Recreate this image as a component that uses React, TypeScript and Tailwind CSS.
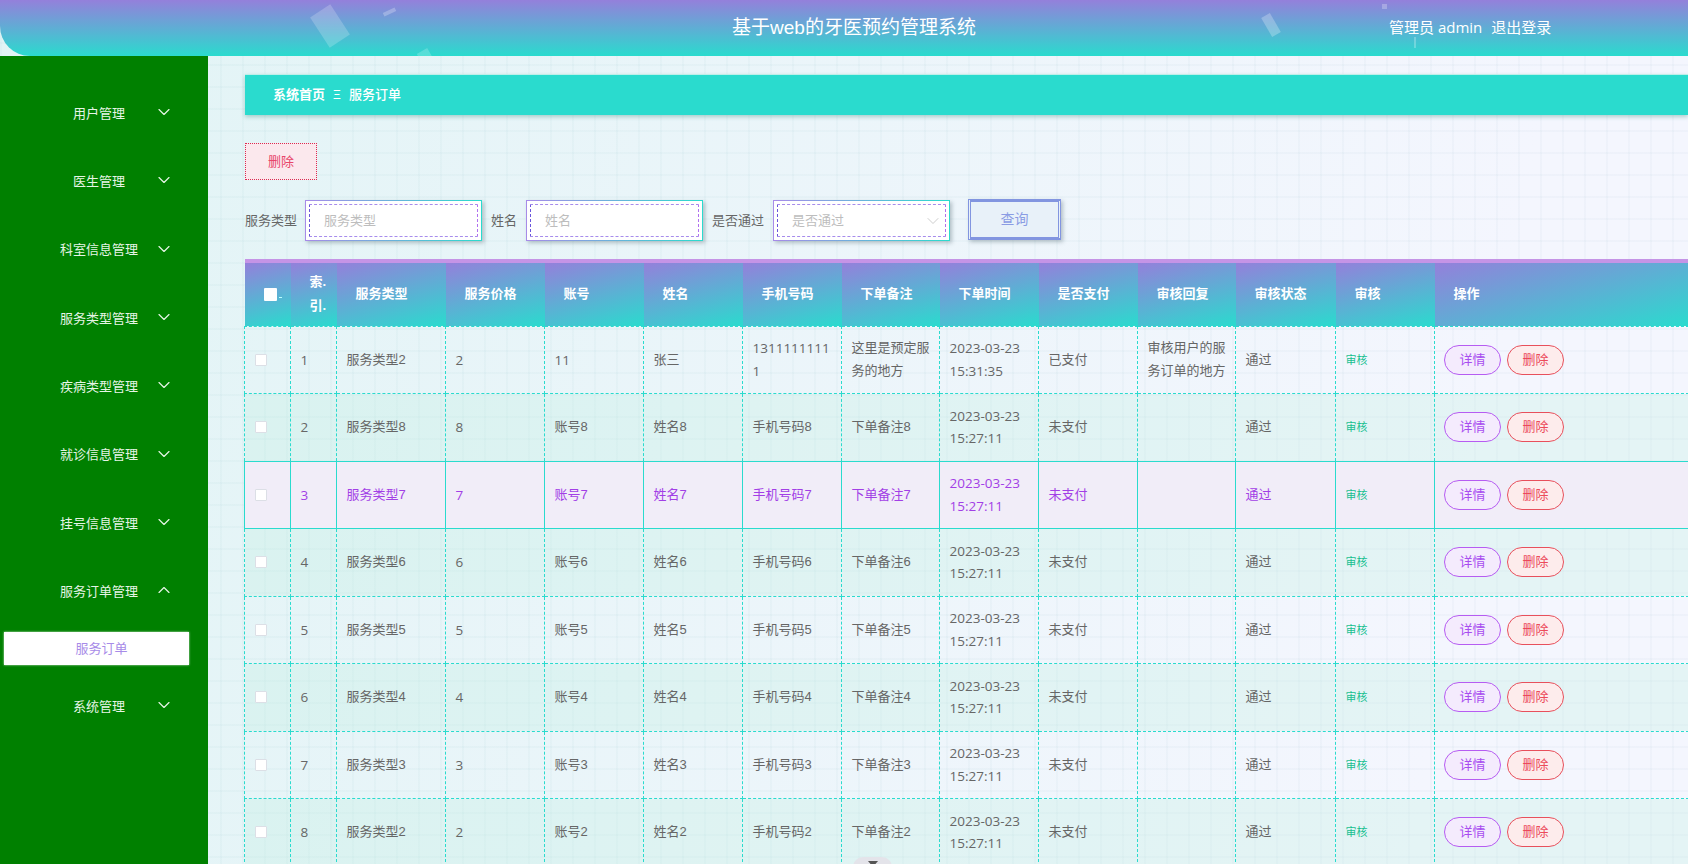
import { ChevronDown, ChevronUp } from "lucide-react";

const menus = ["用户管理", "医生管理", "科室信息管理", "服务类型管理", "疾病类型管理", "就诊信息管理", "挂号信息管理"];

const heads = ["服务类型", "服务价格", "账号", "姓名", "手机号码", "下单备注", "下单时间", "是否支付", "审核回复", "审核状态", "审核", "操作"];

type Row = { id: number; type: string; price: string; acc: string; name: string; phone: string; note: string; time: string; paid: string; reply: string };

const rows: Row[] = [
  { id: 1, type: "服务类型2", price: "2", acc: "11", name: "张三", phone: "13111111111", note: "这里是预定服务的地方", time: "2023-03-23 15:31:35", paid: "已支付", reply: "审核用户的服务订单的地方" },
  ...[8, 7, 6, 5, 4, 3, 2].map((n, i) => ({
    id: i + 2,
    type: `服务类型${n}`,
    price: `${n}`,
    acc: `账号${n}`,
    name: `姓名${n}`,
    phone: `手机号码${n}`,
    note: `下单备注${n}`,
    time: "2023-03-23 15:27:11",
    paid: "未支付",
    reply: "",
  })),
];

function InputBox({ text, select }: { text: string; select?: boolean }) {
  return (
    <div className="h-[41px] w-[177px] shrink-0 bg-[linear-gradient(90deg,#a78be8,#2adbce)] p-px shadow-[2px_2px_4px_rgba(90,110,120,0.4)]">
      <div className="h-full w-full bg-white p-[3px]">
        <div className={`flex h-full w-full items-center justify-between border border-dashed border-y-[#a78cec] border-l-[#6a55dc] border-r-[#b070f0] pl-[14px] text-[13px] text-[#bdbdbd] ${select ? "pr-[2px]" : "pr-[7px]"}`}>
          <span>{text}</span>
          {select && <ChevronDown size={20} strokeWidth={1.1} className="text-[#c8c8c8]" />}
        </div>
      </div>
    </div>
  );
}

function Td({ children, hover, className = "" }: { children?: React.ReactNode; hover: boolean; className?: string }) {
  return (
    <td className={`border border-[#2adbce] pl-[9.5px] pr-[8px] align-middle ${hover ? "border-solid" : "border-dashed"} ${className}`}>{children}</td>
  );
}

const num = "font-['Open_Sans','Noto_Sans_CJK_SC',sans-serif] text-[13.5px]";

export default function App() {
  return (
    <div className="h-[864px] w-[1688px] overflow-hidden bg-[linear-gradient(90deg,rgba(120,170,190,0.05)_2px,transparent_2px),linear-gradient(0deg,rgba(120,170,190,0.05)_2px,transparent_2px),linear-gradient(100deg,#e1f4f5,#f4f6fe_85%)] [background-size:22px_22px,22px_22px,100%_100%] font-['Liberation_Sans','Noto_Sans_CJK_SC',sans-serif] text-[13px]">
      <header className="relative flex h-[56px] items-center overflow-hidden rounded-bl-[30px] bg-[linear-gradient(180deg,#9480db,#2adbce)] text-white">
        <div className="absolute left-[318px] top-[8px] h-[36px] w-[24px] rotate-[-33deg] bg-white/20" />
        <div className="absolute left-[383px] top-[10px] h-[4px] w-[13px] rotate-[-25deg] bg-white/25" />
        <div className="absolute left-[420px] top-[50px] h-[16px] w-[12px] rotate-[-30deg] bg-white/20" />
        <div className="absolute left-[1266px] top-[14px] h-[22px] w-[10px] rotate-[-30deg] bg-white/25" />
        <div className="absolute left-[1382px] top-[4px] h-[5px] w-[5px] bg-white/25" />
        <div className="absolute left-[1414px] top-[37px] h-[11px] w-[2px] bg-white/25" />
        <div className="w-full pl-[20px] text-center text-[19px]">基于web的牙医预约管理系统</div>
        <div className="absolute left-[1389px] top-[17px] flex gap-[9px] font-['Open_Sans','Noto_Sans_CJK_SC',sans-serif] text-[15px] leading-[20px]">
          <span>管理员 admin</span>
          <span>退出登录</span>
        </div>
      </header>

      <div className="flex h-[808px]">
        <aside className="h-full w-[208px] shrink-0 bg-[#008000] pt-[23.5px] text-[13px] text-[#e6f5e6]">
          {menus.map((m) => (
            <div key={m} className="flex h-[68.3px] items-center">
              <span className="w-[198px] text-center">{m}</span>
              <ChevronDown size={20} strokeWidth={1.4} className="-ml-[44px] -mt-[3px] shrink-0" />
            </div>
          ))}
          <div className="flex h-[68.3px] items-center">
            <span className="w-[198px] text-center">服务订单管理</span>
            <ChevronUp size={20} strokeWidth={1.4} className="-ml-[44px] -mt-[3px] shrink-0" />
          </div>
          <div className="mx-[4px] mb-[7px] mt-[6px] flex h-[33.5px] w-[185px] items-center justify-center bg-white pl-[10px] text-[#a78be8] shadow-[0_0_2px_rgba(255,255,255,0.8)]">
            服务订单
          </div>
          <div className="flex h-[68.3px] items-center">
            <span className="w-[198px] text-center">系统管理</span>
            <ChevronDown size={20} strokeWidth={1.4} className="-ml-[44px] -mt-[3px] shrink-0" />
          </div>
        </aside>

        <main className="relative min-w-0 flex-1 pl-[37px] pt-[18px]">
          <div className="flex h-[41px] items-center border-t border-[#bfeee9] bg-[#2adbce] pl-[28px] text-[13px] text-white shadow-[0_2px_4px_rgba(90,160,150,0.45)]">
            <span className="font-bold">系统首页</span>
            <span className="mx-[8px] w-[8px] text-center text-[12px]">Ξ</span>
            <span className="font-medium">服务订单</span>
          </div>

          <button className="mt-[28px] block h-[37px] w-[72px] border border-dotted border-[#dc2a50] bg-[#fbe8ed] text-[13px] text-[#e8456a]">删除</button>

          <div className="mt-[20px] flex h-[41px] items-center whitespace-nowrap text-[#666]">
            <span className="mr-[9px] w-[51px]">服务类型</span>
            <InputBox text="服务类型" />
            <span className="mx-[9px] w-[26px]">姓名</span>
            <InputBox text="姓名" />
            <span className="mx-[9px] w-[52px]">是否通过</span>
            <InputBox text="是否通过" select />
            <button className="-mt-[3px] ml-[18px] h-[41px] w-[93px] border-[3px] border-[#8295e0] bg-[#e8f1f9] text-[14px] text-[#8a9ce4] shadow-[2px_2px_4px_rgba(90,110,120,0.4)] [border-left-style:double] [border-right-style:double]">查询</button>
          </div>

          <table className="-ml-px mt-[18px] w-[1444px] table-fixed border-collapse border-t-[4px] border-t-[#c594e6] text-[13px] leading-[22.5px] text-[#666]">
            <colgroup>
              <col className="w-[46px]" />
              <col className="w-[46px]" />
              <col className="w-[109px]" />
              <col className="w-[99px]" />
              <col className="w-[99px]" />
              <col className="w-[99px]" />
              <col className="w-[99px]" />
              <col className="w-[98px]" />
              <col className="w-[99px]" />
              <col className="w-[99px]" />
              <col className="w-[98px]" />
              <col className="w-[100px]" />
              <col className="w-[99px]" />
              <col className="w-[254px]" />
            </colgroup>
            <thead>
              <tr className="h-[65px] text-[13px] font-bold text-white">
                <th className="bg-[linear-gradient(165deg,#9480db,#2adbce)] pl-[19px] text-left">
                  <span className="flex items-center">
                    <span className="block h-[13px] w-[13px] rounded-[1px] bg-white" />
                    <span className="ml-[2px] mt-[6px] h-[1px] w-[3px] bg-[#bff]" />
                  </span>
                </th>
                <th className="bg-[linear-gradient(165deg,#9480db,#2adbce)] pl-[19px] text-left leading-[24px]">
                  索.
                  <br />
                  引.
                </th>
                {heads.map((h) => (
                  <th key={h} className="bg-[linear-gradient(165deg,#9480db,#2adbce)] pl-[19px] text-left">
                    {h}
                  </th>
                ))}
              </tr>
            </thead>
            <tbody>
              {rows.map((r, idx) => {
                const hover = r.id === 3;
                return (
                  <tr
                    key={r.id}
                    className={`h-[67.5px] ${hover ? "bg-[#f1edf8] text-[#a23fe6]" : idx % 2 === 1 ? "bg-[rgba(192,240,224,0.3)]" : ""}`}
                  >
                    <Td hover={hover}>
                      <span className="block h-[12px] w-[12px] rounded-[1px] border border-[#dcdfe6] bg-white" />
                    </Td>
                    <Td hover={hover} className={num}>{r.id}</Td>
                    <Td hover={hover}>{r.type}</Td>
                    <Td hover={hover} className={num}>{r.price}</Td>
                    <Td hover={hover} className={r.id === 1 ? num : ""}>{r.acc}</Td>
                    <Td hover={hover}>{r.name}</Td>
                    <Td hover={hover} className={r.id === 1 ? `${num} [overflow-wrap:anywhere]` : ""}>{r.phone}</Td>
                    <Td hover={hover}>{r.note}</Td>
                    <Td hover={hover} className={num}>{r.time}</Td>
                    <Td hover={hover}>{r.paid}</Td>
                    <Td hover={hover}>{r.reply}</Td>
                    <Td hover={hover}>通过</Td>
                    <Td hover={hover} className="text-[11px] text-[#17bf90]">审核</Td>
                    <Td hover={hover} className="!pl-[9px]">
                      <span className="flex gap-[6px]">
                        <button className="h-[30px] w-[57px] rounded-[15px] border border-[#b65cf2] bg-[#f4ebfd] text-[13px] text-[#a84df0]">详情</button>
                        <button className="h-[30px] w-[57px] rounded-[15px] border border-[#e8505c] bg-[#fdecec] text-[13px] text-[#ec4a5a]">删除</button>
                      </span>
                    </Td>
                  </tr>
                );
              })}
            </tbody>
          </table>

          <div className="absolute left-[645px] top-[801px] flex h-[12px] w-[39px] justify-center rounded-t-[10px] bg-[#e4e4ea]">
            <span className="mt-[4px] h-0 w-0 border-x-[5px] border-t-[6px] border-x-transparent border-t-[#555]" />
          </div>
        </main>
      </div>
    </div>
  );
}
